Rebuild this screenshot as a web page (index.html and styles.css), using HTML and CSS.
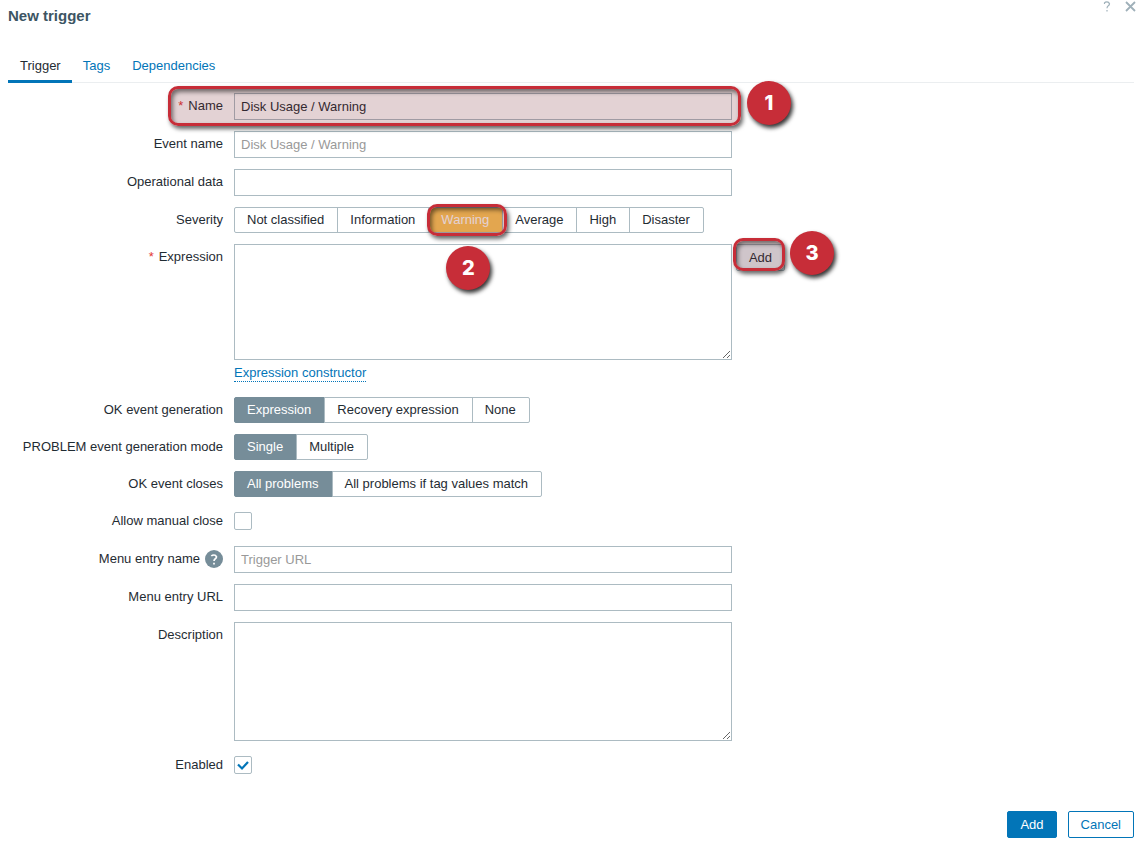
FILE: index.html
```
<!DOCTYPE html>
<html lang="en">
<head>
    <meta charset="UTF-8">
    <meta name="viewport" content="width=device-width, initial-scale=1.0">
    <title>New trigger</title>
    <link rel="stylesheet" href="styles.css">
</head>
<body>
    <header class="dialog-header">
        <h1>New trigger</h1>
        <div class="dialog-controls">
            <button type="button" class="icon-button" aria-label="Help">
                <svg width="8" height="11" viewBox="0 0 8 11"><path d="M1.5 3V1.8Q2.2 .8 4 .8T6.5 2.8Q6.5 4 5.3 4.8T4 7.2M4 9V10.6"/></svg>
            </button>
            <button type="button" class="icon-button" aria-label="Close">
                <svg width="11" height="11" viewBox="0 0 11 11"><path class="cross" d="M1 1L10 10M10 1L1 10"/></svg>
            </button>
        </div>
    </header>

    <nav class="tabs">
        <a href="#trigger" class="active">Trigger</a>
        <a href="#tags">Tags</a>
        <a href="#dependencies">Dependencies</a>
    </nav>

    <form id="trigger">
        <div class="form-row">
            <label class="form-label required" for="name">Name</label>
            <input class="text-field" type="text" id="name" value="Disk Usage / Warning">
            <span class="highlight highlight-name"></span>
            <span class="step step-name">1</span>
        </div>
        <div class="form-row">
            <label class="form-label" for="event-name">Event name</label>
            <input class="text-field" type="text" id="event-name" placeholder="Disk Usage / Warning">
        </div>
        <div class="form-row">
            <label class="form-label" for="opdata">Operational data</label>
            <input class="text-field" type="text" id="opdata">
        </div>
        <div class="form-row">
            <span class="form-label" id="severity-label">Severity</span>
            <div class="segments" role="radiogroup" aria-labelledby="severity-label">
                <label><input type="radio" name="severity"><span>Not classified</span></label>
                <label><input type="radio" name="severity"><span>Information</span></label>
                <label class="warning">
                    <input type="radio" name="severity" checked><span>Warning</span>
                    <i class="highlight highlight-segment"></i>
                    <b class="step step-segment">2</b>
                </label>
                <label><input type="radio" name="severity"><span>Average</span></label>
                <label><input type="radio" name="severity"><span>High</span></label>
                <label><input type="radio" name="severity"><span>Disaster</span></label>
            </div>
        </div>
        <div class="form-row">
            <label class="form-label required" for="expression">Expression</label>
            <div class="expression">
                <textarea class="text-field expression-text" id="expression"></textarea>
                <a class="dotted-link" href="#constructor">Expression constructor</a>
            </div>
            <div class="expression-add">
                <button type="button" class="grey-button">Add</button>
                <span class="highlight highlight-add"></span>
                <span class="step step-add">3</span>
            </div>
        </div>
        <div class="form-row">
            <span class="form-label" id="ok-label">OK event generation</span>
            <div class="segments" role="radiogroup" aria-labelledby="ok-label">
                <label><input type="radio" name="ok-event" checked><span>Expression</span></label>
                <label><input type="radio" name="ok-event"><span>Recovery expression</span></label>
                <label><input type="radio" name="ok-event"><span>None</span></label>
            </div>
        </div>
        <div class="form-row">
            <span class="form-label" id="problem-label">PROBLEM event generation mode</span>
            <div class="segments" role="radiogroup" aria-labelledby="problem-label">
                <label><input type="radio" name="problem-mode" checked><span>Single</span></label>
                <label><input type="radio" name="problem-mode"><span>Multiple</span></label>
            </div>
        </div>
        <div class="form-row">
            <span class="form-label" id="closes-label">OK event closes</span>
            <div class="segments" role="radiogroup" aria-labelledby="closes-label">
                <label><input type="radio" name="ok-closes" checked><span>All problems</span></label>
                <label><input type="radio" name="ok-closes"><span>All problems if tag values match</span></label>
            </div>
        </div>
        <div class="form-row">
            <label class="form-label" for="manual-close">Allow manual close</label>
            <input class="checkbox" type="checkbox" id="manual-close">
        </div>
        <div class="form-row">
            <div class="form-label">
                <label for="menu-name">Menu entry name</label>
                <button type="button" class="hint" aria-label="Menu entry name help">
                    <svg width="8" height="11" viewBox="0 0 8 11"><path d="M1.3 2Q2.3 1 4 1T6.5 2.8Q6.5 4 5.3 4.7T4 7M4 8.8V10.6"/></svg>
                </button>
            </div>
            <input class="text-field" type="text" id="menu-name" placeholder="Trigger URL">
        </div>
        <div class="form-row">
            <label class="form-label" for="menu-url">Menu entry URL</label>
            <input class="text-field" type="text" id="menu-url">
        </div>
        <div class="form-row">
            <label class="form-label" for="description">Description</label>
            <textarea class="text-field description-text" id="description"></textarea>
        </div>
        <div class="form-row">
            <label class="form-label" for="enabled">Enabled</label>
            <input class="checkbox" type="checkbox" id="enabled" checked>
        </div>
    </form>

    <footer class="dialog-footer">
        <button type="submit" form="trigger" class="button">Add</button>
        <button type="button" class="button button-alt">Cancel</button>
    </footer>
</body>
</html>
```
FILE: styles.css
```
* {
    box-sizing: border-box;
}
body {
    margin: 0;
    padding: 0 8px 10px;
    min-height: 100vh;
    display: flex;
    flex-direction: column;
    background-color: #fff;
    color: #1f2c33;
    font-family: "Liberation Sans", Arial, sans-serif;
    font-size: 13px;
    line-height: 16px;
}
button, input, textarea {
    font: inherit;
    color: inherit;
}
button {
    cursor: pointer;
}
a {
    color: #0275b8;
    text-decoration: none;
}

/* Header */
.dialog-header {
    display: flex;
    justify-content: space-between;
    align-items: flex-start;
}
h1 {
    margin: 6px 0 0;
    font-size: 15px;
    line-height: 20px;
    color: #3c5563;
}
.dialog-controls {
    display: flex;
    gap: 14px;
    margin-right: -2px;
    padding-top: 1px;
}
.icon-button {
    display: flex;
    padding: 0;
    border: 0;
    background: none;
}
.icon-button path {
    fill: none;
    stroke: #9fb0b9;
    stroke-width: 1.2;
}
.icon-button .cross {
    stroke-width: 1.8;
}

/* Tabs */
.tabs {
    display: flex;
    margin-top: 24px;
    border-bottom: 1px solid #ebeef0;
}
.tabs a {
    padding: 8px 11px 6px;
    margin-bottom: -1px;
    border-bottom: 3px solid transparent;
}
.tabs .active {
    padding-left: 12px;
    color: #1f2c33;
    border-bottom-color: #0275b8;
}

/* Form */
form {
    display: flex;
    flex-direction: column;
    gap: 11px;
    padding-top: 10px;
}
.form-row {
    position: relative;
    display: grid;
    grid-template-columns: 215px minmax(0, 498px) auto;
    justify-content: start;
    align-items: start;
    column-gap: 11px;
}
.form-label {
    display: flex;
    justify-content: flex-end;
    align-items: center;
    gap: 5px;
    height: 26px;
    text-align: right;
}
.required::before {
    content: "*";
    color: #e33734;
}
.text-field {
    display: block;
    width: 100%;
    height: 27px;
    margin: 0;
    padding: 4px 6px;
    border: 1px solid #acbbc2;
    border-radius: 0;
    background-color: #fff;
    outline: none;
}
.text-field::placeholder {
    color: #999;
}
.expression {
    padding-bottom: 4px;
}
.expression-text {
    height: 116px;
}
.description-text {
    height: 119px;
}
.dotted-link {
    display: inline-block;
    margin-top: 5px;
    border-bottom: 1px dotted #0275b8;
}
.expression-add {
    position: relative;
    margin-left: -7px;
}
.grey-button {
    display: block;
    width: 49px;
    height: 27px;
    padding: 0;
    border: 1px solid #acbbc2;
    border-radius: 2px;
    background-color: #e6eff3;
}

/* Segmented radio lists */
.segments {
    display: flex;
}
.segments label {
    position: relative;
    display: block;
}
.segments label + label {
    margin-left: -1px;
}
.segments input {
    position: absolute;
    inset: 0;
    margin: 0;
    opacity: 0;
}
.segments span {
    display: block;
    height: 26px;
    padding: 0 13px 0 12px;
    border: 1px solid #acbbc2;
    line-height: 24px;
    white-space: nowrap;
}
.segments label:first-child span {
    border-radius: 2px 0 0 2px;
}
.segments label:last-child span {
    border-radius: 0 2px 2px 0;
}
.segments input:checked + span {
    background-color: #768d99;
    border-color: #768d99;
    color: #fff;
}
.segments .warning {
    z-index: 1;
}
.segments .warning input:checked + span {
    background-color: #ffc859;
    border-color: #acbbc2;
}

/* Checkboxes */
.checkbox {
    appearance: none;
    width: 18px;
    height: 18px;
    margin: 4px 0 5px;
    border: 1px solid #acbbc2;
    border-radius: 2px;
    background-color: #fff;
}
.checkbox:checked {
    background: url("data:image/svg+xml,%3Csvg xmlns='http://www.w3.org/2000/svg' viewBox='0 0 16 16'%3E%3Cpath d='M3 7.5L7 11.5L13 5' fill='none' stroke='%230275b8' stroke-width='2.2'/%3E%3C/svg%3E") center / 16px no-repeat;
}
.hint {
    display: flex;
    justify-content: center;
    align-items: center;
    width: 18px;
    height: 18px;
    padding: 0;
    border: 0;
    border-radius: 50%;
    background-color: #768d99;
}
.hint path {
    fill: none;
    stroke: #fff;
    stroke-width: 1.7;
}

/* Step markers over the form */
.highlight {
    position: absolute;
    z-index: 2;
    border: 3px solid #c72d38;
    border-radius: 10px;
    background-color: rgba(115, 30, 38, 0.2);
    box-shadow: 2px 3px 4px rgba(0, 0, 0, 0.6), inset 2px 3px 4px rgba(0, 0, 0, 0.5);
    pointer-events: none;
}
.highlight-name {
    top: -7px;
    bottom: -6px;
    left: 160px;
    width: min(573px, 100% - 160px);
}
.highlight-segment {
    inset: -3px -4px -3px -1px;
}
.highlight-add {
    inset: -6px 0 0 -3px;
    height: 33px;
}
.step {
    position: absolute;
    z-index: 3;
    width: 44px;
    height: 44px;
    border-radius: 50%;
    background-color: #c72d38;
    box-shadow: 2px 3px 4px rgba(0, 0, 0, 0.8);
    color: #fff;
    font-family: Inter, sans-serif;
    font-size: 20px;
    font-weight: 800;
    line-height: 44px;
    text-align: center;
}
.step-name {
    top: -12px;
    left: 739px;
}
.step-segment {
    top: 39px;
    left: 18px;
}
.step-add {
    top: -13px;
    left: 54px;
}

/* Footer */
.dialog-footer {
    display: flex;
    justify-content: flex-end;
    gap: 11px;
    margin-top: auto;
    padding-top: 24px;
}
.button {
    height: 27px;
    padding: 0 12px;
    border: 1px solid #0275b8;
    border-radius: 2px;
    background-color: #0275b8;
    color: #fff;
}
.button-alt {
    background-color: #fff;
    color: #0275b8;
}
```
